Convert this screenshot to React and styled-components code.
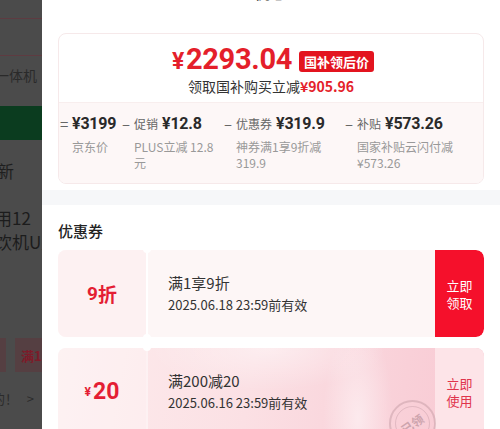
import React from "react";
import styled, { createGlobalStyle } from "styled-components";

const GlobalStyle = createGlobalStyle`
  html, body { margin: 0; padding: 0; background: #fff; }
  body { font-family: "Noto Sans CJK SC", "Noto Sans", sans-serif; }
  * { box-sizing: border-box; }
`;

const NUM = `"Roboto", "Noto Sans CJK SC", sans-serif`;
const RED = "#e41f2b";

const Screen = styled.div`
  display: flex;
  width: 500px;
  height: 429px;
  overflow: hidden;
`;

/* page behind the sheet, already dimmed by the mask */
const DimmedPage = styled.div`
  width: 42px;
  flex-shrink: 0;
  background: #4b4b4b;
  display: flex;
  flex-direction: column;
  overflow: hidden;
  color: #1f1f1f;
`;

const PageRule = styled.div`
  height: 1px;
  background: #5e3b41;
  margin-top: ${(p) => p.$top}px;
`;

const PageRow = styled.div`
  height: ${(p) => p.$h}px;
  margin-left: ${(p) => p.$shift || 0}px;
  display: flex;
  align-items: center;
  justify-content: ${(p) => (p.$end ? "flex-end" : "flex-start")};
  padding-right: ${(p) => (p.$end ? 5 : 0)}px;
  font-size: ${(p) => p.$size || 14}px;
  color: ${(p) => p.$color || "#1f1f1f"};
  white-space: nowrap;
`;

const GreenBar = styled.div`
  height: 34px;
  margin-top: 12px;
  background: #0b3c1f;
`;

const PageText = styled.div`
  margin: 6px 0 0 -5px;
  font-size: 17px;
  line-height: 24px;
  white-space: nowrap;
  color: #1c1c1c;
`;

const TagRow = styled.div`
  display: flex;
  gap: 9px;
  height: 34px;
  margin-top: 84px;
`;

const PageTag = styled.div`
  width: ${(p) => p.$w}px;
  flex-shrink: 0;
  background: #553f42;
  color: #7d1b29;
  font-size: 13px;
  font-weight: 700;
  display: flex;
  align-items: center;
  padding-left: 6px;
  white-space: nowrap;
`;

/* sheet */
const Sheet = styled.div`
  flex: 1;
  min-width: 0;
  background: #fff;
  display: flex;
  flex-direction: column;
`;

const SheetHeader = styled.div`
  flex-shrink: 0;
  height: 24px;
  margin-top: -20px;
  display: grid;
  grid-template-columns: 1fr auto 1fr;
  align-items: center;
  padding: 0 17px 0 16px;
`;

const SheetTitle = styled.div`
  grid-column: 2;
  font-size: 16px;
  font-weight: 500;
  color: #1a1a1a;
  line-height: 24px;
`;

const CloseIcon = styled.svg`
  justify-self: end;
  width: 15px;
  height: 15px;
`;

const PriceCard = styled.div`
  flex-shrink: 0;
  margin: 29px 16px 0;
  border: 1px solid #f6e9ea;
  border-radius: 8px;
  overflow: hidden;
`;

const PriceTop = styled.div`
  padding: 9px 0 7px;
  display: flex;
  flex-direction: column;
  align-items: center;
`;

const PriceRow = styled.div`
  display: flex;
  align-items: center;
  gap: 7px;
  height: 34px;
  padding-left: 4px;
`;

const PriceValue = styled.div`
  font-family: ${NUM};
  font-size: 29px;
  font-weight: 700;
  color: ${RED};
  letter-spacing: -0.3px;
  line-height: 34px;
`;

const Yen = styled.span`
  font-size: ${(p) => p.$size || 23}px;
  margin-right: 2px;
`;

const PriceBadge = styled.div`
  height: 21px;
  line-height: 21px;
  padding: 0 5px;
  margin-top: 3px;
  background: #e3141f;
  color: #fff;
  border-radius: 3px;
  font-size: 13px;
  font-weight: 700;
`;

const PriceNote = styled.div`
  height: 18px;
  font-size: 14px;
  line-height: 18px;
  color: #333;
  strong {
    color: ${RED};
    font-weight: 600;
  }
`;

const Breakdown = styled.div`
  display: flex;
  background: #fdf7f7;
  border-top: 1px solid #f8eeee;
  padding: 10px 0 12px 1px;
`;

const BreakItem = styled.div`
  display: flex;
  width: ${(p) => (p.$w ? `${p.$w}px` : "auto")};
  flex: ${(p) => (p.$w ? "none" : 1)};
  padding-right: ${(p) => p.$pr || 0}px;
`;

const BreakSym = styled.div`
  width: 12px;
  flex-shrink: 0;
  font-size: 15px;
  line-height: 22px;
  color: #666;
`;

const BreakBody = styled.div`
  min-width: 0;
`;

const BreakHead = styled.div`
  display: flex;
  align-items: baseline;
  gap: 4px;
  height: 22px;
  line-height: 22px;
  white-space: nowrap;
`;

const BreakTag = styled.span`
  font-size: 12px;
  color: #666;
`;

const BreakAmount = styled.span`
  font-family: ${NUM};
  font-size: 16px;
  font-weight: 700;
  letter-spacing: -0.2px;
  color: #2a2a2a;
`;

const BreakLabel = styled.div`
  margin-top: 4px;
  font-size: 12px;
  line-height: 16px;
  color: #999;
`;

const GreyBand = styled.div`
  flex-shrink: 0;
  height: 15px;
  margin-top: 6px;
  background: #f6f7f9;
`;

const CouponSection = styled.div`
  padding: 15px 16px 0;
`;

const SectionTitle = styled.div`
  font-size: 15px;
  font-weight: 500;
  line-height: 22px;
  color: #222;
`;

const CouponList = styled.div`
  display: flex;
  flex-direction: column;
  gap: 11px;
  margin-top: 8px;
`;

const Coupon = styled.div`
  position: relative;
  display: flex;
  flex-shrink: 0;
  height: 87px;
  border-radius: 8px;
  overflow: hidden;
  background: ${(p) =>
    p.$used
      ? `radial-gradient(ellipse 50px 140px at 300px 70px, rgba(255,255,255,0.5), rgba(255,255,255,0) 70%),
         radial-gradient(ellipse 170px 60px at 210px 0px, rgba(255,255,255,0.45), rgba(255,255,255,0) 70%),
         linear-gradient(100deg, #fdeced 0%, #fbe0e4 45%, #f9d0d8 80%, #f8c8d2 100%)`
      : "#fdf6f6"};
`;

const CouponFace = styled.div`
  width: 88px;
  flex-shrink: 0;
  display: flex;
  align-items: center;
  justify-content: center;
  background: ${(p) => (p.$used ? "rgba(255,255,255,0.3)" : "#fdf1f2")};
  color: #e41e34;
  font-family: ${NUM};
  font-weight: 700;
  font-size: ${(p) => (p.$used ? 23 : 19)}px;
`;

const FaceText = styled.span`
  font-family: "Noto Sans CJK SC", sans-serif;
  font-weight: 700;
`;

const CouponSplit = styled.div`
  position: relative;
  width: 2px;
  flex-shrink: 0;
  background: ${(p) => (p.$used ? "rgba(255,255,255,0.45)" : "#fff")};
  &::before,
  &::after {
    content: "";
    position: absolute;
    left: -3px;
    width: 8px;
    height: 8px;
    border-radius: 50%;
    background: #fff;
  }
  &::before { top: -5px; }
  &::after { bottom: -5px; }
`;

const CouponBody = styled.div`
  flex: 1;
  display: flex;
  flex-direction: column;
  justify-content: center;
  padding-left: 20px;
  color: #333;
`;

const CouponTitle = styled.div`
  font-size: 15px;
  line-height: 20px;
`;

const CouponDate = styled.div`
  margin-top: 3px;
  font-size: 13px;
  line-height: 18px;
`;

const CouponAction = styled.div`
  width: 49px;
  flex-shrink: 0;
  display: flex;
  flex-direction: column;
  align-items: center;
  justify-content: center;
  font-size: 13px;
  line-height: 17px;
  background: ${(p) => (p.$used ? "#fde4e8" : "#f5102b")};
  color: ${(p) => (p.$used ? "#e0344c" : "#fff")};
  border-radius: 0 8px 8px 0;
`;

const Stamp = styled.div`
  position: absolute;
  left: 331px;
  top: 52px;
  width: 47px;
  height: 47px;
  border-radius: 50%;
  border: 2px solid rgba(190, 150, 160, 0.45);
  display: flex;
  align-items: center;
  justify-content: center;
  &::before {
    content: "";
    position: absolute;
    inset: 4px;
    border-radius: 50%;
    border: 1px solid rgba(190, 150, 160, 0.4);
  }
`;

const StampText = styled.span`
  transform: rotate(-35deg);
  font-size: 12px;
  font-weight: 700;
  color: rgba(180, 140, 150, 0.65);
`;

const breakdown = [
  { sym: "=", amount: "¥3199", label: "京东价", w: 62 },
  { sym: "–", tag: "促销", amount: "¥12.8", label: "PLUS立减 12.8 元", w: 102, pr: 8 },
  { sym: "–", tag: "优惠券", amount: "¥319.9", label: "神券满1享9折减 319.9", w: 121, pr: 14 },
  { sym: "–", tag: "补贴", amount: "¥573.26", label: "国家补贴云闪付减 ¥573.26", pr: 14 },
];

export default function App() {
  return (
    <Screen>
      <GlobalStyle />
      <DimmedPage>
        <PageRule $top={18} />
        <PageRule $top={36} />
        <PageRow $h={38} $end $color="#2a2a2a">净水一体机</PageRow>
        <GreenBar />
        <PageRow $h={60} $size={17} $shift={-3}>新</PageRow>
        <PageText>
          用12
          <br />
          饮机U型
        </PageText>
        <TagRow>
          <PageTag $w={5} />
          <PageTag $w={40}>满1享</PageTag>
        </TagRow>
        <PageRow $h={52} $size={13} $color="#2b2b2b" $shift={-8}>
          的！&nbsp;&nbsp;&nbsp;&gt;
        </PageRow>
      </DimmedPage>

      <Sheet>
        <SheetHeader>
          <SheetTitle>优惠</SheetTitle>
          <CloseIcon viewBox="0 0 16 16">
            <path d="M2 2 L14 14 M14 2 L2 14" stroke="#333" strokeWidth="1.4" fill="none" />
          </CloseIcon>
        </SheetHeader>

        <PriceCard>
          <PriceTop>
            <PriceRow>
              <PriceValue>
                <Yen>¥</Yen>2293.04
              </PriceValue>
              <PriceBadge>国补领后价</PriceBadge>
            </PriceRow>
            <PriceNote>
              领取国补购买立减<strong>¥905.96</strong>
            </PriceNote>
          </PriceTop>
          <Breakdown>
            {breakdown.map((b) => (
              <BreakItem key={b.amount} $w={b.w} $pr={b.pr}>
                <BreakSym>{b.sym}</BreakSym>
                <BreakBody>
                  <BreakHead>
                    {b.tag && <BreakTag>{b.tag}</BreakTag>}
                    <BreakAmount>{b.amount}</BreakAmount>
                  </BreakHead>
                  <BreakLabel>{b.label}</BreakLabel>
                </BreakBody>
              </BreakItem>
            ))}
          </Breakdown>
        </PriceCard>

        <GreyBand />

        <CouponSection>
          <SectionTitle>优惠券</SectionTitle>
          <CouponList>
            <Coupon>
              <CouponFace>
                9<FaceText>折</FaceText>
              </CouponFace>
              <CouponSplit />
              <CouponBody>
                <CouponTitle>满1享9折</CouponTitle>
                <CouponDate>2025.06.18 23:59前有效</CouponDate>
              </CouponBody>
              <CouponAction>
                <span>立即</span>
                <span>领取</span>
              </CouponAction>
            </Coupon>
            <Coupon $used>
              <CouponFace $used>
                <Yen $size={12}>¥</Yen>20
              </CouponFace>
              <CouponSplit $used />
              <CouponBody>
                <CouponTitle>满200减20</CouponTitle>
                <CouponDate>2025.06.16 23:59前有效</CouponDate>
              </CouponBody>
              <CouponAction $used>
                <span>立即</span>
                <span>使用</span>
              </CouponAction>
              <Stamp>
                <StampText>已领</StampText>
              </Stamp>
            </Coupon>
          </CouponList>
        </CouponSection>
      </Sheet>
    </Screen>
  );
}
